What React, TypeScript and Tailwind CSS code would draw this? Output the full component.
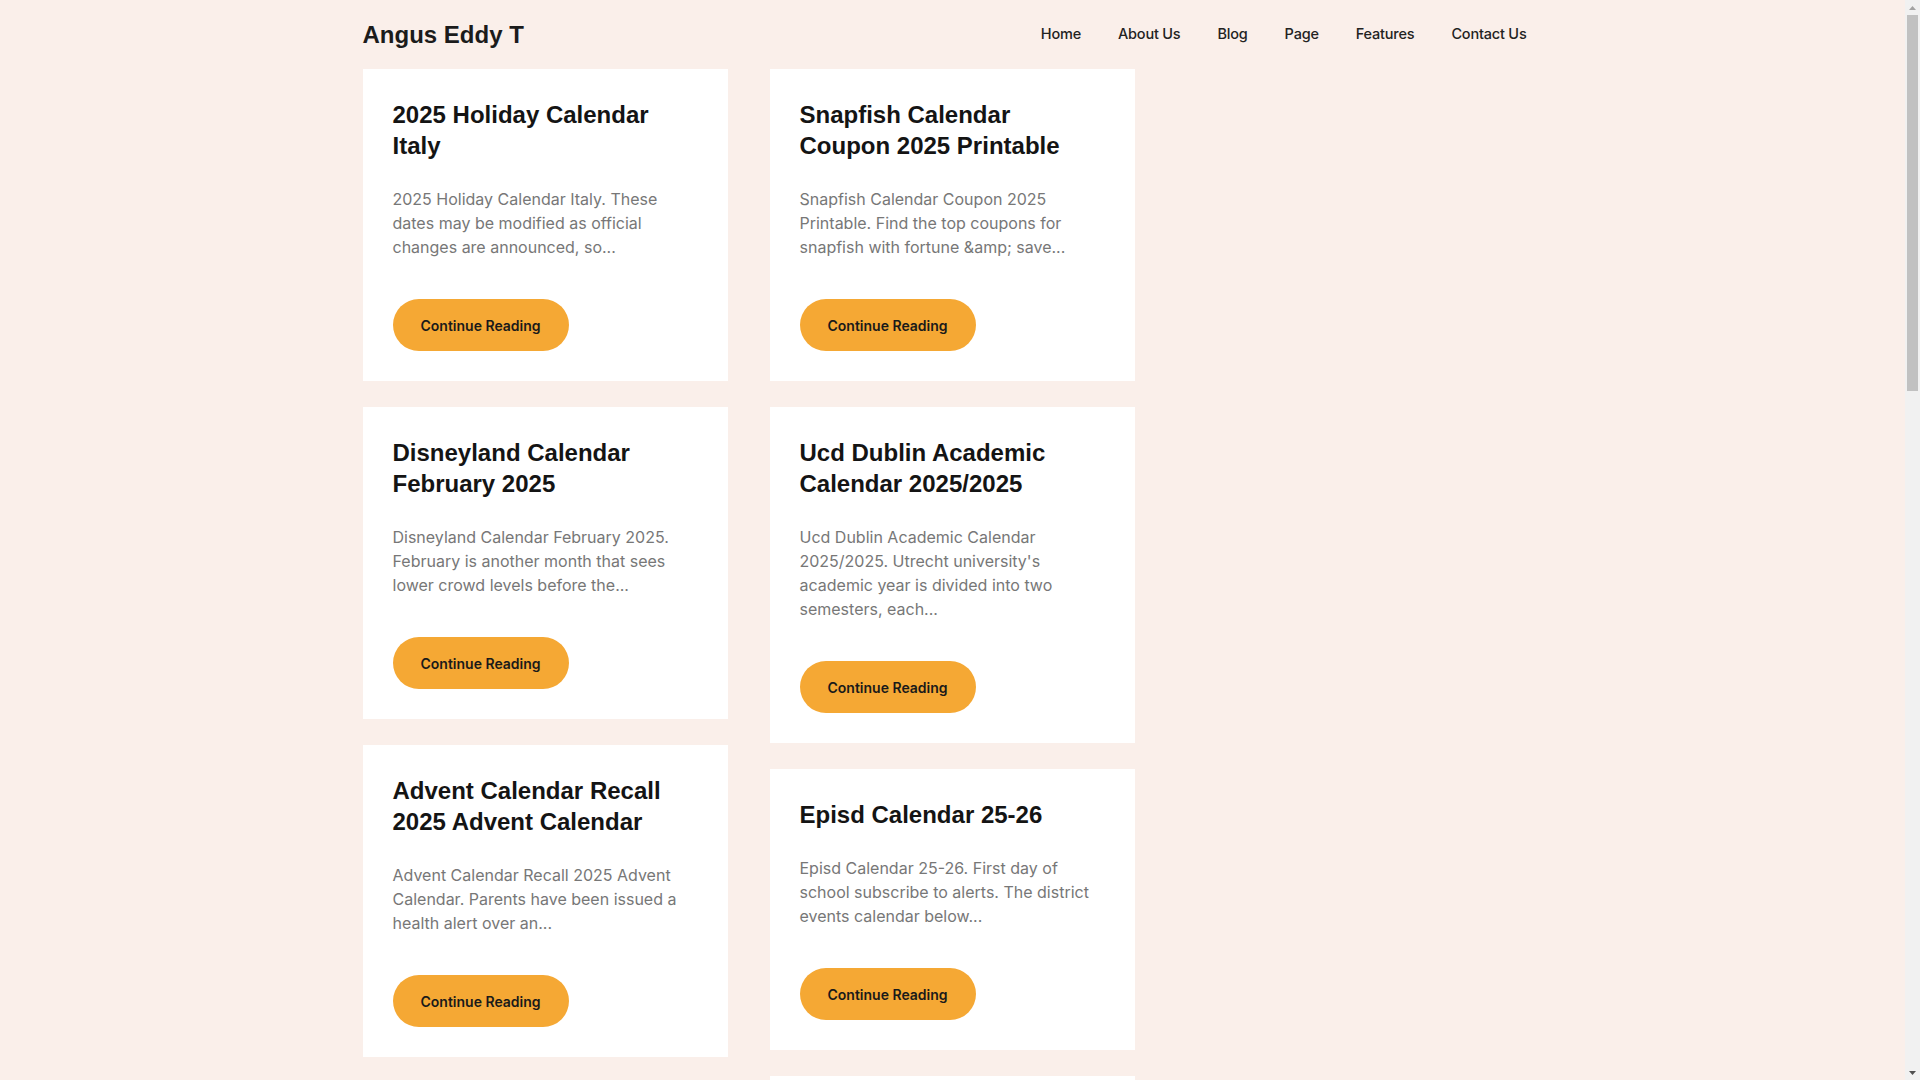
type Post = {
  title: string;
  excerpt: string;
};

const leftPosts: Post[] = [
  {
    title: "2025 Holiday Calendar Italy",
    excerpt:
      "2025 Holiday Calendar Italy. These dates may be modified as official changes are announced, so...",
  },
  {
    title: "Disneyland Calendar February 2025",
    excerpt:
      "Disneyland Calendar February 2025. February is another month that sees lower crowd levels before the...",
  },
  {
    title: "Advent Calendar Recall 2025 Advent Calendar",
    excerpt:
      "Advent Calendar Recall 2025 Advent Calendar. Parents have been issued a health alert over an...",
  },
  {
    title: "Lunar Calendar 2025 Chinese New Year",
    excerpt:
      "Lunar Calendar 2025 Chinese New Year. The lunar new year begins on a different date each...",
  },
  {
    title: "Uga Academic Calendar Spring 2025",
    excerpt:
      "Uga Academic Calendar Spring 2025. The calendar lists the first and last day of classes for...",
  },
  {
    title: "Printable Monthly Calendar 2025",
    excerpt:
      "Printable Monthly Calendar 2025. Plan your year with free templates you can download and...",
  },
  {
    title: "Nfl Calendar 2025 Season Schedule",
    excerpt:
      "Nfl Calendar 2025 Season Schedule. Every game of the regular season is listed with kickoff...",
  },
  {
    title: "Lds Calendar 2025 Printable",
    excerpt:
      "Lds Calendar 2025 Printable. Beautiful artwork for each month of the year, ready to print...",
  },
];

const rightPosts: Post[] = [
  {
    title: "Snapfish Calendar Coupon 2025 Printable",
    excerpt:
      "Snapfish Calendar Coupon 2025 Printable. Find the top coupons for snapfish with fortune &amp; save...",
  },
  {
    title: "Ucd Dublin Academic Calendar 2025/2025",
    excerpt:
      "Ucd Dublin Academic Calendar 2025/2025. Utrecht university's academic year is divided into two semesters, each...",
  },
  {
    title: "Episd Calendar 25-26",
    excerpt:
      "Episd Calendar 25-26. First day of school subscribe to alerts. The district events calendar below...",
  },
  {
    title: "Ohio State Calendar 2025",
    excerpt:
      "Ohio State Calendar 2025. Important dates for the autumn and spring semesters are listed...",
  },
  {
    title: "Jewish Holiday Calendar 2025",
    excerpt:
      "Jewish Holiday Calendar 2025. All major holidays begin at sundown on the evening before...",
  },
  {
    title: "Ramadan Calendar 2025 Usa",
    excerpt:
      "Ramadan Calendar 2025 Usa. Sehri and iftar timings for the holy month in major cities...",
  },
  {
    title: "Moon Calendar 2025 Full Moon Dates",
    excerpt:
      "Moon Calendar 2025 Full Moon Dates. Track every phase of the moon throughout the year with...",
  },
  {
    title: "Wall Calendar 2025 Large Print",
    excerpt:
      "Wall Calendar 2025 Large Print. Large boxes give you plenty of room to write down your...",
  },
];

const navItems = ["Home", "About Us", "Blog", "Page", "Features", "Contact Us"];

function PostCard({ post }: { post: Post }) {
  return (
    <article className="bg-white p-[30px]">
      <h2 className="font-['Liberation_Sans',Arial,sans-serif] text-[24px] font-bold leading-[31px] text-[#141414]">
        {post.title}
      </h2>
      <p className="mt-[26px] font-['Inter',sans-serif] text-[16px] leading-[24px] text-[#777777]">
        {post.excerpt}
      </p>
      <a
        href="#"
        className="mt-[40px] inline-flex h-[52px] items-center rounded-full bg-[#F5A834] px-[28px] font-['Inter',sans-serif] text-[14px] font-semibold text-[#1a1a1a]"
      >
        Continue Reading
      </a>
    </article>
  );
}

// browser scrollbar as seen in the screenshot
function Scrollbar() {
  return (
    <div className="flex h-screen w-[15px] shrink-0 flex-col items-center bg-[#f1f1f1]">
      <div className="flex h-[15px] w-full items-center justify-center">
        <svg width="7" height="4" viewBox="0 0 7 4">
          <path d="M3.5 0 L7 4 L0 4 Z" fill="#a3a3a3" />
        </svg>
      </div>
      <div className="h-[376px] w-[11px] bg-[#c1c1c1]" />
      <div className="flex-1" />
      <div className="flex h-[15px] w-full items-center justify-center">
        <svg width="7" height="4" viewBox="0 0 7 4">
          <path d="M0 0 L7 0 L3.5 4 Z" fill="#505050" />
        </svg>
      </div>
    </div>
  );
}

export default function App() {
  return (
    <div className="flex h-screen overflow-hidden bg-[#FAEFEA] font-['Inter',sans-serif]">
      <div className="flex-1 overflow-hidden">
        <header className="mx-auto flex h-[69px] w-[1180px] items-center justify-between">
          <a
            href="#"
            className="font-['Liberation_Sans',Arial,sans-serif] text-[24px] font-bold text-[#1b1b1b]"
          >
            Angus Eddy T
          </a>
          <nav className="flex gap-[37px] pb-[2px] pr-[16px]">
            {navItems.map((item) => (
              <a
                key={item}
                href="#"
                className="font-['Inter',sans-serif] text-[14.5px] font-medium tracking-[-0.2px] text-[#222222]"
              >
                {item}
              </a>
            ))}
          </nav>
        </header>

        <main className="mx-auto flex w-[1180px] gap-[42px] pb-[60px]">
          <div className="flex w-[365px] flex-col gap-[26px]">
            {leftPosts.map((post) => (
              <PostCard key={post.title} post={post} />
            ))}
          </div>
          <div className="flex w-[365px] flex-col gap-[26px]">
            {rightPosts.map((post) => (
              <PostCard key={post.title} post={post} />
            ))}
          </div>
        </main>
      </div>
      <Scrollbar />
    </div>
  );
}
